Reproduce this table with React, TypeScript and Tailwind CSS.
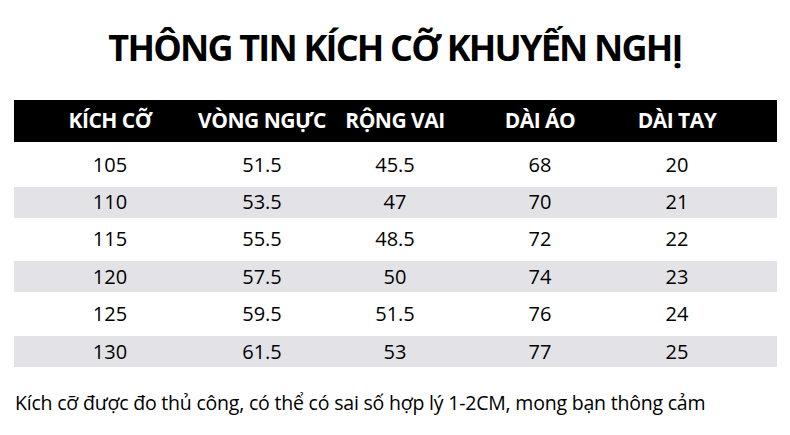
const rows = [
  ['105', '51.5', '45.5', '68', '20'],
  ['110', '53.5', '47', '70', '21'],
  ['115', '55.5', '48.5', '72', '22'],
  ['120', '57.5', '50', '74', '23'],
  ['125', '59.5', '51.5', '76', '24'],
  ['130', '61.5', '53', '77', '25'],
];

const headers = ['KÍCH CỠ', 'VÒNG NGỰC', 'RỘNG VAI', 'DÀI ÁO', 'DÀI TAY'];

const cols = 'grid grid-cols-[192px_112px_154px_136px_138px]';

export default function App() {
  return (
    <div className="h-[435px] w-[790px] overflow-hidden bg-white font-['Open_Sans','Noto_Sans',sans-serif] text-black">
      <h1 className="pt-[24px] text-center text-[36px] font-bold leading-[48px] tracking-[-1.8px]">
        THÔNG TIN KÍCH CỠ KHUYẾN NGHỊ
      </h1>

      <div className="mx-[14px] mt-[28px] w-[763px]">
        <div className={`${cols} h-[42px] items-center bg-black text-[21px] font-bold tracking-[-0.5px] text-white`}>
          {headers.map((h) => (
            <div key={h} className="flex justify-center whitespace-nowrap">
              {h}
            </div>
          ))}
        </div>

        <div className="mt-[4px]">
          {rows.map((r, i) => (
            <div key={r[0]} className="flex h-[37.4px] items-center">
              <div
                className={`${cols} h-[31px] w-full items-center text-[20px] ${
                  i % 2 === 1 ? 'bg-[#e3e3e7]' : ''
                }`}
              >
                {r.map((v, j) => (
                  <div key={j} className="flex justify-center">
                    {v}
                  </div>
                ))}
              </div>
            </div>
          ))}
        </div>
      </div>

      <p className="mt-[20px] whitespace-nowrap pl-[15px] text-[19.5px] leading-[26px] tracking-[-0.2px]">
        Kích cỡ được đo thủ công, có thể có sai số hợp lý 1-2CM, mong bạn thông cảm
      </p>
    </div>
  );
}
